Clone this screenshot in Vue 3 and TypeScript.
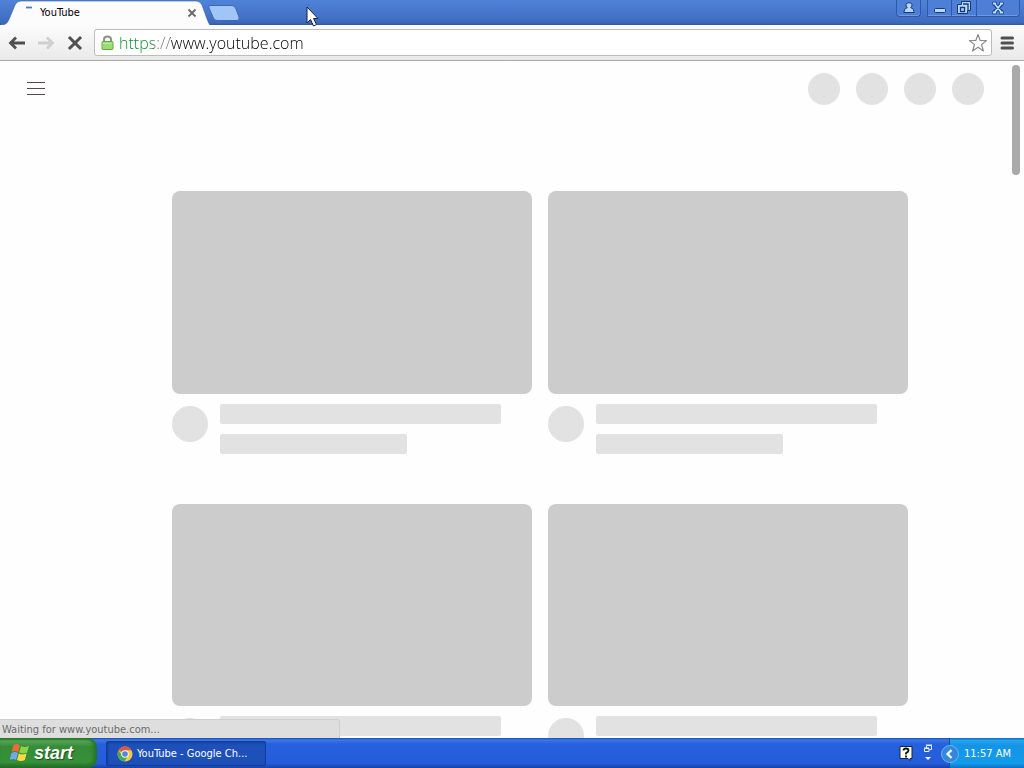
<script setup lang="ts">
import { ref } from 'vue'

const address = ref('https://www.youtube.com')
const shortcuts = [1, 2, 3, 4]
const placeholders = [1, 2, 3, 4]
</script>

<template>
  <div class="desktop">
    <header class="titlebar">
      <div class="tab">
        <svg class="tab-shape" viewBox="0 0 210 25" preserveAspectRatio="none" aria-hidden="true">
          <path d="M0 25C7 25 8 22 10 17L15 5Q17 1 21 1H196Q200 1 202 5L207 19Q209 24 210 25" fill="#fcfcfd" stroke="#335ca8" stroke-width=".6" />
        </svg>
        <svg class="spinner" width="10" height="14" viewBox="0 0 10 14" aria-hidden="true"><path d="M2 1.500H8" fill="none" stroke="#5177bd" stroke-width="1.800" /></svg>
        <span class="tab-title">YouTube</span>
        <button class="plain tab-close" aria-label="Close tab">
          <svg width="10" height="10" viewBox="0 0 10 10"><path d="M1.500 1.500l7 7M8.500 1.500l-7 7" stroke="#686868" stroke-width="1.800" /></svg>
        </button>
      </div>
      <button class="plain new-tab" aria-label="New tab">
        <svg width="34" height="16" viewBox="0 0 34 16"><path d="M3 .5H25Q28 .5 29 4L32 12Q33 15.500 30 15.500H10Q7 15.500 6 12L2 3Q1 .5 3 .5Z" fill="#a0c6f7" stroke="#3e68b5" /></svg>
      </button>
      <div class="window-buttons">
        <button class="win profile" aria-label="Profile">
          <svg width="12" height="12" viewBox="0 0 12 12"><path d="M6 .8A2.500 2.500 0 0 1 7.600 5.500Q11.200 6.500 11.200 10.500H.8Q.8 6.500 4.400 5.500A2.500 2.500 0 0 1 6 .8Z" fill="#b8d8ff" stroke="#173777" /></svg>
        </button>
        <div class="win-group">
          <button class="win" aria-label="Minimize"><svg width="14" height="14" viewBox="0 0 14 14"><rect x="1.500" y="7.500" width="11" height="4" rx="1" fill="#b8d8ff" stroke="#173777" /></svg></button>
          <button class="win" aria-label="Restore"><svg width="14" height="14" viewBox="0 0 14 14"><path d="M4.500 .5h9v9h-3v3h-10v-9h4z" fill="#b8d8ff" stroke="#173777" /><path d="M6 3h5v6M3.500 6.500h4v4h-4z" fill="none" stroke="#173777" stroke-width="1.300" /></svg></button>
          <button class="win close" aria-label="Close"><svg width="14" height="14" viewBox="0 0 14 14"><path d="M3 2.500l8 9M11 2.500l-8 9M1.500 2.500h4M8.500 2.500h4M1.500 11.500h4M8.500 11.500h4" stroke="#173777" stroke-width="3.500" /><path d="M3.500 2.500l7 9M10.500 2.500l-7 9M2 2.500h3M9 2.500h3M2 11.500h3M9 11.500h3" stroke="#b8e0ff" stroke-width="1.800" /></svg></button>
        </div>
      </div>
    </header>

    <nav class="toolbar" aria-label="Browser">
      <button class="plain" aria-label="Back"><svg width="18" height="16" viewBox="0 0 18 16"><path d="M8 2.500L2.500 8 8 13.500M3 8h14" fill="none" stroke="#505050" stroke-width="2.800" /></svg></button>
      <button class="plain" aria-label="Forward"><svg width="18" height="16" viewBox="0 0 18 16"><path d="M10 2.500L15.500 8 10 13.500M15 8H1" fill="none" stroke="#d0d0d0" stroke-width="2.800" /></svg></button>
      <button class="plain" aria-label="Stop"><svg width="18" height="16" viewBox="0 0 18 16"><path d="M4 3l10 10M14 3L4 13" stroke="#505050" stroke-width="3" stroke-linecap="square" /></svg></button>
      <div class="omnibox">
        <svg class="lock" width="13" height="16" viewBox="0 0 13 16" aria-hidden="true">
          <path d="M3 8V4.500Q3 1.500 6.500 1.500T10 4.500V8" fill="none" stroke="#8b918b" stroke-width="2" />
          <rect x="1" y="6.500" width="11" height="8" rx="1" fill="#9bdc78" stroke="#62a83b" /><path d="M2 8.500h9" stroke="#bceb9f" />
        </svg>
        <input v-model="address" class="address" aria-label="Address" spellcheck="false">
        <button class="plain" aria-label="Bookmark this page"><svg width="20" height="20" viewBox="0 0 20 20"><path d="M10 1.500l2.200 6h6.300l-5 4.100 1.900 6.400-5.400-3.700L4.600 18l1.900-6.400-5-4.100h6.300Z" fill="#fff" stroke="#8b8b8b" stroke-width="1.200" stroke-linejoin="round" /></svg></button>
      </div>
      <button class="plain menu" aria-label="Menu"><svg width="14" height="14" viewBox="0 0 14 14"><path d="M2 2h10.500M2 7h10.500M2 12h10.500" stroke="#505050" stroke-width="3" stroke-linecap="round" /></svg></button>
    </nav>

    <main class="page">
      <div class="masthead">
        <button class="plain guide" aria-label="Guide"><svg width="18" height="14" viewBox="0 0 18 14"><path d="M0 .5h18M0 6.500h18M0 12.500h18" stroke="#514957" /></svg></button>
        <div class="shortcuts"><span v-for="item in shortcuts" :key="item" class="dot"></span></div>
      </div>
      <div class="feed">
        <article v-for="item in placeholders" :key="item" class="card">
          <div class="thumb"></div>
          <div class="details">
            <span class="avatar"></span>
            <div class="lines"><span class="line"></span><span class="line short"></span></div>
          </div>
        </article>
      </div>
      <div class="scroll-thumb"></div>
      <div class="status" role="status">Waiting for www.youtube.com...</div>
    </main>

    <footer class="taskbar">
      <button class="start">
        <svg width="20" height="20" viewBox="0 0 20 20" aria-hidden="true">
          <path d="M3.500 2Q6.500 0 10 2.500L8.200 9Q5 7 1.700 9Z" fill="#f06a35" /><path d="M11 3Q14.500 5 19 3L17 9.500Q13 11.500 9.200 9.500Z" fill="#8bd447" />
          <path d="M1.500 10Q5 8 7.900 10L6 17Q3.500 15 -.3 17Z" fill="#72a7f6" /><path d="M8.900 10.500Q12 12.500 16.600 10.500L14.800 17Q11 19 7 17Z" fill="#ffda45" />
        </svg>
        <span>start</span>
      </button>
      <button class="task">
        <svg width="16" height="16" viewBox="0 0 16 16" aria-hidden="true">
          <circle cx="8" cy="8" r="7.500" fill="#f3cb43" /><path d="M8 8L1.500 4.300A7.500 7.500 0 0 1 14.500 4.300H8Z" fill="#df5547" /><path d="M1.500 4.300A7.500 7.500 0 0 0 7.500 15.500L11 9.500 5 9.500Z" fill="#48a65c" />
          <circle cx="8" cy="8" r="3.800" fill="#f4f4f4" /><circle cx="8" cy="8" r="2.800" fill="#4c88de" />
        </svg>
        <span>YouTube - Google Ch...</span>
      </button>
      <div class="tray-tools">
        <button class="plain" aria-label="Help"><svg width="14" height="16" viewBox="0 0 14 16"><path d="M1 1.500h12v12h-2v2l-2-2H1Z" fill="#fffff0" stroke="#18223b" /><path d="M4.500 5.500Q4.500 3.500 7 3.500t2.500 2Q9.500 7 7 8V9.500M7 10.500v2" fill="none" stroke="#111" stroke-width="1.800" /></svg></button>
        <button class="plain" aria-label="Toolbar options"><svg width="10" height="20" viewBox="0 0 10 20"><path d="M3.500 5V2.500h5v4H6M3 2h6M1.500 5.500H6v3H1.500zM1 5h5" fill="none" stroke="#e9f2ff" /><path d="M2 14h6l-3 3Z" fill="#fff" /></svg></button>
      </div>
      <div class="tray">
        <button class="plain expand" aria-label="Show hidden icons"><svg width="18" height="18" viewBox="0 0 18 18"><circle cx="9" cy="9" r="8.500" fill="#3288dc" stroke="#6fb2f0" /><path d="M10.500 5L6.500 9l4 4" fill="none" stroke="#fff" stroke-width="2.200" /></svg></button>
        <time>11:57 AM</time>
      </div>
    </footer>
    <svg class="pointer" width="13" height="21" viewBox="0 0 13 21" aria-hidden="true"><path d="M1 1V17L4.500 13.500 7.500 20 10.500 18.500 7.500 12.500H12Z" fill="#fff" stroke="#18213b" /></svg>
  </div>
</template>

<style>
body { margin: 0; }
</style>

<style scoped>
* { box-sizing: border-box; }
.desktop { position: relative; height: 100vh; display: flex; flex-direction: column; overflow: hidden; background: #fff; font: 11px/14px "DejaVu Sans Condensed", "DejaVu Sans", sans-serif; color: #111; }
svg { display: block; flex: none; }
button { font: inherit; padding: 0; }
.plain { border: 0; background: none; }
.titlebar { flex: 0 0 25px; display: flex; align-items: flex-start; background: linear-gradient(#4f82d8, #4474ca 60%, #3c69bb 92%, #2f579f); }
.tab { position: relative; flex: 0 1 210px; height: 25px; display: flex; align-items: center; padding: 1px 13px 0 24px; }
.tab-shape { position: absolute; inset: 0; width: 100%; height: 100%; }
.spinner, .tab-title, .tab-close { position: relative; }
.tab-title { flex: 1; margin-left: 6px; color: #000; }
.new-tab { padding-top: 5px; margin-left: -3px; }
.window-buttons { margin-left: auto; padding-right: 4px; display: flex; gap: 6px; }
.win-group { display: flex; }
.win { width: 25px; height: 17px; display: flex; align-items: center; justify-content: center; border: 1px solid #2e59a9; border-top: 0; background: #4c7fd5; box-shadow: inset 0 -1px #6b9be4; }
.win + .win { border-left: 0; }
.profile { border-radius: 0 0 4px 4px; }
.close { width: 43px; border-radius: 0 0 4px 0; }
.toolbar { flex: 0 0 36px; display: flex; align-items: center; padding: 0 10px 0 8px; background: linear-gradient(#fcfcfd, #e9e9ea); border-bottom: 1px solid #a9a9a9; gap: 11px; }
.omnibox { flex: 1; height: 27px; display: flex; align-items: center; margin-left: -1px; border: 1px solid #bcbcbc; border-radius: 3px; background: #fff; padding: 0 3px 0 6px; }
.address { flex: 1; min-width: 0; height: 25px; border: 0; outline: 0; padding: 1px 0 0 5px; font: 300 16px/24px "Open Sans", "Noto Sans", sans-serif; color: transparent; caret-color: #111; background: linear-gradient(90deg, #078a2d 0 40px, #777 40px 56px, #000 56px); background-clip: text; -webkit-background-clip: text; }
.menu { margin-left: -3px; }
.page { position: relative; flex: 1; min-height: 0; overflow: hidden; background: #fefefe; }
.masthead { display: flex; justify-content: space-between; align-items: center; height: 56px; padding: 0 40px 0 27px; }
.shortcuts { display: flex; gap: 16px; }
.dot { width: 32px; height: 32px; border-radius: 50%; background: #e2e2e2; }
.feed { display: grid; grid-template-columns: 1fr 1fr; gap: 50px 16px; padding: 74px 116px 0 172px; }
.thumb { aspect-ratio: 16 / 9; border-radius: 8px; background: #ccc; }
.details { display: flex; gap: 12px; padding-top: 10px; }
.avatar { flex: none; width: 36px; height: 36px; margin-top: 2px; border-radius: 50%; background: #e2e2e2; }
.lines { flex: 1; display: flex; flex-direction: column; gap: 10px; }
.line { width: 90%; height: 20px; border-radius: 2px; background: #e2e2e2; }
.short { width: 60%; }
.scroll-thumb { position: absolute; top: 4px; right: 4px; width: 8px; height: 110px; border-radius: 4px; background: #a9a9a9; }
.status { position: absolute; left: 0; bottom: 0; width: 340px; height: 19px; padding: 3px 2px 0; border: 1px solid #cfcfcf; border-left: 0; border-bottom: 0; border-radius: 0 3px 0 0; background: #dedede; color: #6b6b6b; }
.taskbar { flex: 0 0 30px; display: flex; align-items: center; color: #fff; background: linear-gradient(#1f4fae 0, #3a78e9 7%, #2660dc 20%, #245ddb 85%, #1941a5); }
.start { width: 97px; height: 30px; display: flex; align-items: center; gap: 4px; padding-left: 10px; border: 0; border-radius: 0 9px 9px 0; color: #fff; background: linear-gradient(#286b2c, #55a955 10%, #378b39 28%, #359237 80%, #24672a); box-shadow: inset -3px 0 4px #236f28; font: italic bold 18px/24px "Liberation Sans", Arial, sans-serif; text-shadow: 1px 1px 1px #234b25; }
.task { width: 160px; height: 25px; display: flex; align-items: center; gap: 4px; margin-left: 9px; padding: 2px 0 0 10px; border: 1px solid #123c9c; border-radius: 2px; background: #1e50b9; color: #fff; box-shadow: inset 1px 1px 2px #153f98; white-space: nowrap; }
.tray-tools { margin-left: auto; display: flex; align-items: center; gap: 10px; padding-right: 16px; }
.tray { height: 30px; width: 75px; display: flex; align-items: center; gap: 5px; padding-top: 1px; background: linear-gradient(#1265bc 0, #23a5f0 8%, #1594e6 25%, #139bea 85%, #0c70c3); border-left: 1px solid #0c51a6; white-space: nowrap; }
.expand { margin-left: -9px; }
.pointer { position: absolute; top: 6px; left: 306px; }
</style>
